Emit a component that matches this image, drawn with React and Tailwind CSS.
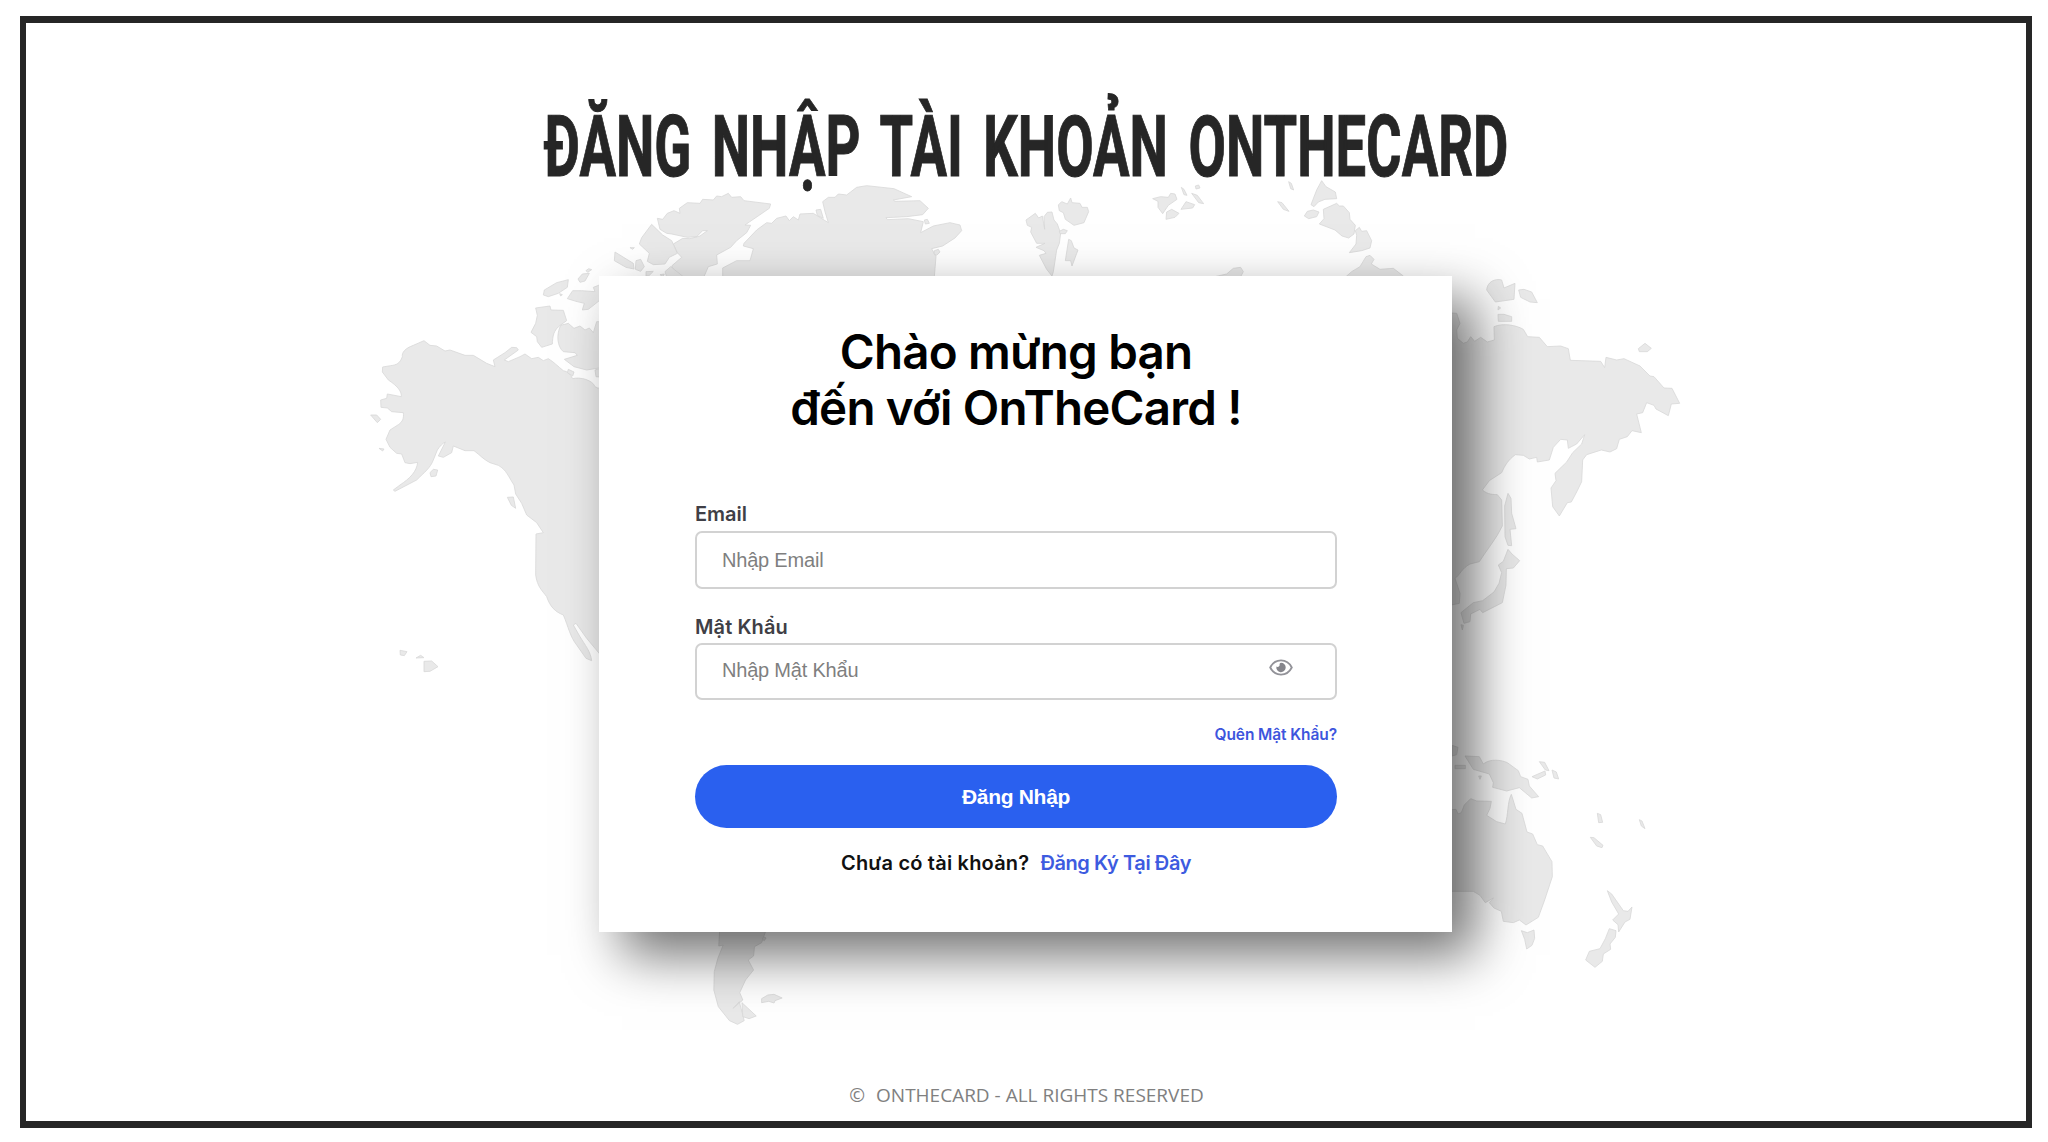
import React from "react";

const ALASKA_AND_WEST = [
  "M760 640 L745 655 L735 650 C728 630 690 620 668 626 C660 612 655 605 640 602 C625 590 610 575 595 566 L580 572 L565 562 L545 566 L525 552 L510 560 L475 575 L463 570 L505 540 L500 533 L485 532 L465 548 L430 570 L435 590 L410 580 L370 556 L345 556 L300 540 L285 543 L260 528 L240 526 L222 512 L190 526 C165 535 155 548 157 560 C150 580 140 585 122 587 L98 591 L97 606 L115 630 C145 650 155 665 154 680 L112 672 L110 685 L92 690 L93 712 L112 714 L125 725 L160 728 C162 745 158 755 145 764 L120 780 L108 808 L120 832 L140 850 L155 852 L165 878 L180 881 L203 877 C200 905 180 925 150 945 L130 960 L135 964 L200 930 C225 905 240 895 250 870 L262 840 C270 828 278 820 286 816 L265 858 L280 862 L305 848 L310 828 L345 842 L372 842 C390 855 400 868 420 878 L445 886 C470 900 475 920 492 945 L497 972 L515 1000 L530 1035 L560 1058 L580 1088 L558 1092 L557 1215 C562 1250 575 1260 590 1280 C600 1310 615 1325 640 1335 C655 1370 660 1400 680 1425 L708 1465 L725 1472 C722 1445 705 1425 690 1400 L670 1365 L678 1360 L710 1405 L760 1465 Z",
  "M557 414 L600 408 L603 420 L640 421 L650 452 L632 465 C610 480 608 500 607 522 L575 532 L562 515 L560 500 L543 487 L557 460 L562 436 Z",
  "M632 466 L655 460 L672 475 L690 468 L705 480 L718 474 L730 488 L740 455 L760 455 V592 L710 600 L672 590 L643 568 L682 556 L675 548 L640 545 C622 530 618 495 632 466 Z",
  "M735 600 L760 592 V622 L738 620 Z M655 598 L672 606 L668 618 L652 608 Z",
  "M580 375 L583 360 L620 338 L655 329 L652 352 L625 370 L595 380 Z",
  "M652 386 L668 362 L695 362 L735 365 L730 352 L748 345 V392 L715 418 L697 420 L703 400 L678 394 Z",
  "M684 327 L697 312 L718 310 L705 333 L690 337 Z M708 302 L716 296 L725 299 L713 307 Z M629 371 L637 374 L632 378 Z",
  "M62 735 L80 735 L92 748 L82 758 Z M87 835 L102 837 L98 843 Z M240 908 L250 898 L263 900 L258 918 L243 920 Z",
  "M472 982 L490 981 L497 1015 L484 1006 Z M150 1441 L171 1445 L163 1457 L151 1455 Z M198 1464 L212 1456 L222 1463 Z M222 1474 L245 1473 L264 1490 L240 1504 L222 1505 Z",
];

const ARCTIC = [
  "M172 145 L188 148 L202 130 L222 122 L240 130 L238 115 L262 98 L300 100 L308 88 L340 90 L350 78 L365 80 L385 70 L395 82 L422 80 L432 92 L512 102 L508 115 L435 165 L452 166 L440 188 L410 212 L392 232 L350 255 L352 282 L325 290 L312 320 H232 L215 288 L245 262 L232 248 L220 222 L248 205 L270 206 L300 198 L322 182 L308 182 L290 200 L262 202 L215 192 L200 190 L180 178 Z",
  "M155 163 L188 195 L215 212 L232 250 L208 262 L195 282 L160 284 L142 274 L148 250 L118 222 L125 203 Z",
  "M45 246 L100 280 L102 297 L78 292 L43 272 Z M108 272 L122 268 L133 290 L122 304 L106 298 Z M90 233 L103 233 L98 238 Z M138 305 L160 304 L146 318 H138 Z M180 314 L193 312 L188 320 Z M212 290 L195 305 L200 320 H250 Z",
  "M368 320 V294 L410 272 L450 272 L460 236 L430 228 L432 220 L470 180 L500 158 L515 160 L530 145 L558 138 L568 152 L580 140 L595 150 L600 132 L640 130 L685 158 L675 125 L668 95 L685 82 L705 82 L715 72 L740 75 L770 52 L800 47 L882 56 L935 80 L880 90 L885 94 L960 92 L985 115 L968 134 L920 140 L858 143 L862 149 L925 146 L970 155 L962 188 L1000 168 L1050 158 L1080 165 L1085 182 L1065 204 L1028 228 L995 236 L1008 260 L1003 320 Z",
  "M648 120 L662 118 L670 145 L652 136 Z M973 150 L982 148 L988 160 L976 162 Z M1003 242 L1015 238 L1020 246 L1010 256 L1002 252 Z",
];

const NORTHERN_ISLANDS = [
  "M78 150 L106 130 L116 144 L127 138 L134 178 L132 140 L142 127 L156 126 L162 150 L172 162 L182 190 L178 220 L170 240 L160 305 L156 318 L140 298 L118 256 L138 250 L132 242 L108 232 L135 220 L110 220 L92 186 L95 172 L82 166 Z",
  "M175 105 L185 95 L202 102 L212 84 L216 98 L240 100 L246 112 L262 112 L266 125 L252 158 L222 166 L196 148 L190 128 L178 122 Z",
  "M178 184 L190 178 L202 182 L196 191 L180 191 Z M206 208 L214 212 L222 234 L234 240 L216 288 L212 272 L196 272 Z",
  "M458 86 L482 80 L505 82 L512 70 L525 72 L531 88 L505 106 L488 131 L474 112 L474 94 Z M500 126 L515 118 L537 130 L525 142 L498 148 Z M543 118 L558 95 L584 104 L578 114 Z",
  "M544 52 L552 58 L561 76 L552 74 Z M575 70 L592 76 L611 101 L596 98 Z M586 48 L596 45 L600 54 L588 57 Z M866 35 L874 40 L881 60 L872 56 Z M833 95 L846 98 L867 124 L850 118 Z",
  "M965 32 L978 50 L1006 66 L1010 86 L975 88 L955 96 L942 110 L933 104 L950 60 Z",
  "M913 138 L922 124 L940 120 L957 126 L950 140 L926 146 Z M970 118 L1010 100 L1018 108 L1030 108 L1048 128 L1050 148 L1066 166 L1062 192 L1046 204 L1026 198 L1005 180 L958 162 L972 146 Z",
  "M1078 172 L1085 184 L1100 182 L1115 212 L1110 234 L1085 242 L1048 248 L1068 222 L1070 196 L1066 182 Z",
  "M1038 320 L1055 305 L1080 290 L1098 260 L1110 256 L1122 268 L1114 282 L1140 298 L1180 295 L1210 318 V322 Z M645 320 L680 312 L700 295 L722 292 L730 305 L722 320 Z",
];

const EAST_ASIA = [
  "M50 158 L80 160 L90 190 L80 210 L82 235 L100 250 L112 246 L122 230 L134 244 L152 232 L172 246 L193 240 L192 200 C220 188 260 196 280 208 L293 230 L328 232 L352 260 L392 258 L415 266 L421 301 L512 304 L524 323 L528 292 L560 300 L582 296 L630 318 L660 348 L672 350 L702 384 L726 385 L749 430 L724 432 L715 467 L678 447 L672 436 L650 428 L638 458 L620 462 L634 518 L606 512 L592 530 L568 538 L560 566 L540 576 L514 570 L470 584 L458 600 L455 665 L442 692 L424 726 L412 728 L388 768 L368 740 L363 684 L378 662 L375 640 L410 606 L428 578 L455 552 L464 524 L440 552 L415 565 L412 540 L392 538 L370 562 L358 600 L322 606 L320 592 L298 597 L280 586 L256 584 C235 600 225 615 215 638 L178 662 L157 690 C175 705 190 703 202 704 L215 720 L217 798 C200 835 170 870 148 905 L120 912 C95 925 90 945 75 955 L90 1000 L88 1030 L50 1038 Z",
  "M170 90 C172 65 195 55 215 60 L222 84 L255 70 L252 118 L196 126 Z M266 90 L282 88 L305 96 L322 128 L300 126 L272 112 Z M205 139 L212 144 L204 150 Z M204 163 L222 163 L245 170 V184 L205 184 Z M625 266 L645 250 L664 265 L652 275 L628 275 Z",
  "M234 700 L243 715 L245 760 L258 806 L240 808 L245 857 L234 856 L225 830 L224 738 Z",
  "M234 868 L246 882 L269 902 L250 924 L229 926 L228 975 L217 1028 L158 1058 L150 1048 L122 1062 L120 1085 L102 1090 L93 1058 L130 1028 L158 1022 L192 996 L207 970 L215 938 L205 915 L220 904 Z M93 1094 L100 1096 L97 1110 Z",
];

const OCEANIA = [
  "M50 270 L78 268 L84 282 L94 278 L103 255 L122 236 L140 243 L184 244 L180 265 L170 286 L200 305 L226 312 C235 285 232 245 244 223 L258 268 L276 280 L291 336 L308 342 L322 374 L338 378 L366 425 L367 470 L344 540 L325 592 L288 615 L268 600 L250 608 L220 604 L214 574 L192 564 L178 548 L190 534 L166 548 L150 526 L130 514 H50 Z",
  "M105 108 L148 110 L160 132 C180 115 215 120 232 128 L265 152 L272 170 L294 178 L298 198 L326 230 L305 234 L268 203 L230 213 L188 202 L190 188 L178 162 L130 148 Z",
  "M66 76 L84 82 L80 104 L66 108 Z M75 136 H106 V146 H75 Z M146 168 L154 168 L150 178 Z M328 125 L344 127 L357 152 L346 150 Z M306 170 L345 153 L347 165 L322 177 Z M366 150 L379 156 L386 177 L372 174 Z",
  "M502 280 L512 284 L518 307 L506 308 Z M481 352 L492 353 L519 376 L516 383 L500 378 Z M628 299 L636 303 L645 326 L634 318 Z",
  "M532 512 L545 522 L580 572 L594 574 L606 561 L600 598 L585 606 L566 636 L564 614 L548 600 L566 582 L545 546 Z M538 626 L558 632 L556 652 L540 672 L542 688 L520 702 L517 724 L495 742 L467 720 L478 694 L510 686 L526 656 Z",
  "M274 632 L292 638 L312 630 L314 655 L306 676 L290 687 L284 658 Z",
];

const PATAGONIA = [
  "M268 90 H372 L362 128 L346 140 L344 168 L332 180 L344 210 L326 240 L313 278 L320 300 L298 325 L312 305 L320 345 L323 362 L308 373 L290 362 L265 320 L255 270 L256 215 L264 175 L276 135 L266 138 Z",
  "M318 308 L350 348 L334 356 L320 350 Z M362 296 L376 285 L390 283 L408 294 L392 302 L390 309 L378 304 L362 308 Z M366 110 L372 114 L368 122 L364 118 Z",
];

function Region({ transform, paths }) {
  return (
    <g transform={transform}>
      {paths.map((d, i) => (
        <path key={i} d={d} vectorEffect="non-scaling-stroke" />
      ))}
    </g>
  );
}

function WorldMap() {
  return (
    <svg
      className="absolute inset-0"
      width="2048"
      height="1142"
      viewBox="0 0 2048 1142"
      fill="#e9e9e9"
      stroke="#d8d8d8"
      strokeWidth="0.8"
      strokeLinejoin="round"
      aria-hidden="true"
    >
      <Region transform="translate(350 170) scale(.33333)" paths={ALASKA_AND_WEST} />
      <Region transform="translate(600 170) scale(.33333)" paths={ARCTIC} />
      <Region transform="translate(1000 170) scale(.33333)" paths={NORTHERN_ISLANDS} />
      <Region transform="translate(1430 260) scale(.33333)" paths={EAST_ASIA} />
      <Region transform="translate(1430 720) scale(.33333)" paths={OCEANIA} />
      <Region transform="translate(600 900) scale(.44643 .33333)" paths={PATAGONIA} />
    </svg>
  );
}

function EyeIcon() {
  return (
    <svg width="24" height="17" viewBox="0 0 24 17" fill="none" aria-hidden="true">
      <path d="M1.2 8.5C6 -.9 18 -.9 22.8 8.5C18 17.9 6 17.9 1.2 8.5Z" stroke="#929298" strokeWidth="1.8" />
      <path d="M12 3.8A4.7 4.7 0 1 1 7.4 7.6C8.8 8.5 11 7.6 10.6 5.2C10.6 4.5 11.2 3.9 12 3.8Z" fill="#85858b" />
    </svg>
  );
}

function LoginCard() {
  return (
    <main className="relative ml-[573px] mt-[67px] flex h-[656px] w-[853px] flex-col bg-white pl-[96px] pr-[115px] shadow-[23px_23px_50px_rgba(0,0,0,0.56)]">
      <h2 className="mt-[48px] whitespace-nowrap text-center font-['Inter'] text-[47.5px] font-semibold leading-[56px] tracking-[-0.8px] text-black">
        Chào mừng bạn
        <br />
        đến với OnTheCard !
      </h2>

      <label className="mt-[64px] h-[28px] font-['Inter'] text-[20px] font-semibold leading-[28px] text-[#3f3f46]">
        Email
      </label>
      <div className="mt-[3px] flex h-[58px] items-center rounded-[7px] border-2 border-[#d2d2d2] pl-[25px] font-['Liberation_Sans'] text-[20px] tracking-[-0.2px] text-[#7f7f7f]">
        Nhập Email
      </div>

      <label className="mt-[24px] h-[28px] font-['Inter'] text-[20px] font-semibold leading-[28px] tracking-[0.1px] text-[#3f3f46]">
        Mật Khẩu
      </label>
      <div className="mt-[2px] flex h-[57px] items-center justify-between rounded-[7px] border-2 border-[#d2d2d2] pb-[3px] pl-[25px] pr-[42px] font-['Liberation_Sans'] text-[20px] tracking-[-0.2px] text-[#7f7f7f]">
        <span>Nhập Mật Khẩu</span>
        <span className="mb-[6px]">
          <EyeIcon />
        </span>
      </div>

      <a className="mt-[23px] self-end font-['Inter'] text-[15.5px] font-semibold leading-[24px] tracking-[-0.1px] text-[#3d55dd]">
        Quên Mật Khẩu?
      </a>
      <button className="mt-[18px] h-[63px] shrink-0 rounded-full bg-[#2a60ef] font-['Liberation_Sans'] text-[21px] font-bold tracking-[-0.3px] text-white">
        Đăng Nhập
      </button>
      <p className="mt-[21px] flex justify-center gap-[11px] whitespace-nowrap font-['Inter'] text-[20px] font-semibold leading-[28px] text-[#111]">
        <span className="tracking-[0.2px]">Chưa có tài khoản?</span>
        <a className="tracking-[-0.4px] text-[#3d5be0]">Đăng Ký Tại Đây</a>
      </p>
    </main>
  );
}

export default function App() {
  return (
    <div className="relative h-[1142px] w-[2048px] overflow-hidden bg-white pl-[20px] pt-[16px]">
      <WorldMap />
      <div className="relative flex h-[1112px] w-[2012px] flex-col border-x-[6px] border-y-[7px] border-[#262626]">
        <header className="mt-[66px] mb-[4px] flex h-[116px] justify-center">
          <h1 className="origin-center scale-x-[0.632] whitespace-nowrap font-['Roboto'] text-[86px] font-bold leading-[116px] text-[#262626] [-webkit-text-stroke:1px_#262626] [word-spacing:11px]">
            ĐĂNG NHẬP TÀI KHOẢN ONTHECARD
          </h1>
        </header>
        <LoginCard />
        <footer className="mt-[149px] flex justify-center gap-[11px] pl-[1px] font-['Open_Sans'] text-[19px] leading-[28px] text-[#808080]">
          <span>©</span>
          <span>ONTHECARD - ALL RIGHTS RESERVED</span>
        </footer>
      </div>
    </div>
  );
}
